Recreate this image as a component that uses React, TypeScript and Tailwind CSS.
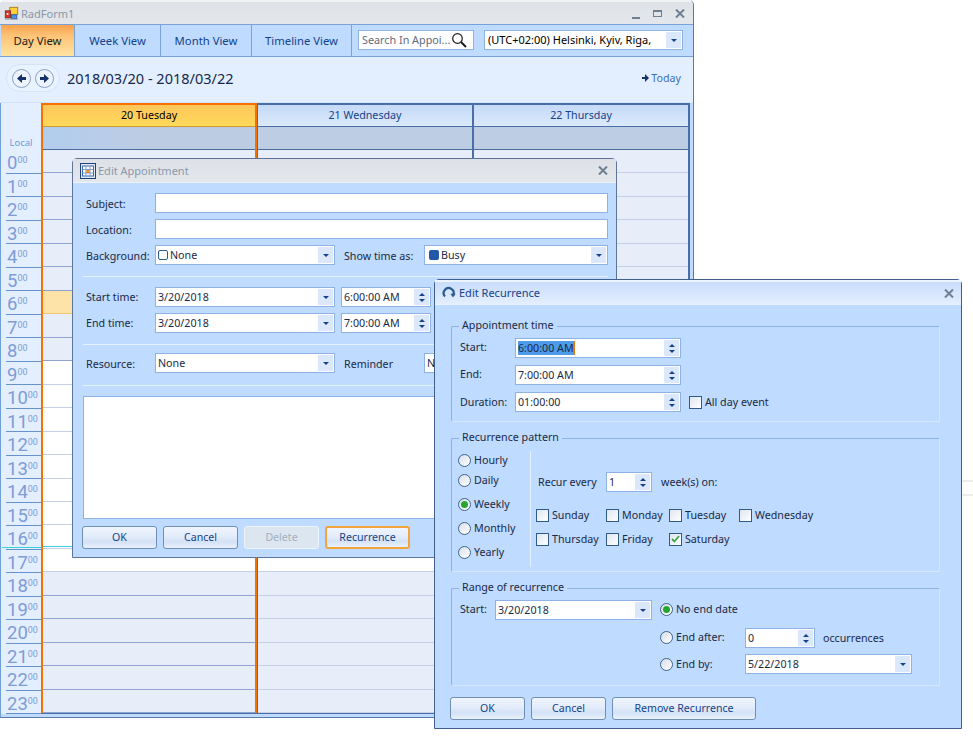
import type { ReactNode } from 'react';

const hours = Array.from({ length: 24 }, (_, i) => i);
const isShaded = (h: number) => h < 9 || h > 17;

function CloseIcon({ className = '' }: { className?: string }) {
  return (
    <svg width="10" height="9" viewBox="0 0 10 9" className={className}>
      <path d="M1 .5l8 8M9 .5l-8 8" stroke="#6f7f92" strokeWidth="2" fill="none" />
    </svg>
  );
}

function AppIcon() {
  return (
    <svg width="15" height="15" viewBox="0 0 17 17" className="mr-[2px]">
      <rect x="6.5" y="1.5" width="9" height="8" fill="#ffd23c" stroke="#a8791e" />
      <rect x="1.5" y="5.5" width="6" height="8" fill="#d8342a" stroke="#7b2a22" />
      <rect x="8.5" y="10" width="6" height="4.5" fill="#4c8fe6" stroke="#2a5fa8" />
      <rect x="3" y="8" width="2" height="2" fill="#fff" />
      <rect x="1" y="14.5" width="15" height="1" fill="#9aa6b4" />
    </svg>
  );
}

function CalendarIcon() {
  return (
    <svg width="16" height="16" viewBox="0 0 16 16">
      <rect x=".5" y=".5" width="15" height="15" fill="#dfe9f7" stroke="#1d4278" />
      <rect x="2.5" y="3" width="11" height="10" fill="#fff" stroke="#3a67a6" />
      <path d="M6 3v10M10 3v10M2.5 6.5h11M2.5 10h11" stroke="#7d9ccb" />
      <rect x="6.5" y="7" width="3" height="3" fill="#f08a1c" />
    </svg>
  );
}

function RecurIcon() {
  return (
    <svg width="14" height="14" viewBox="0 0 14 14">
      <path d="M3 10.5A5 5 0 1 1 11.3 9" stroke="#2b5a8f" strokeWidth="2.2" fill="none" />
      <path d="M8.4 7.8h5.2l-2.6 3.6z" fill="#2b5a8f" />
    </svg>
  );
}

function Triangle({ up = false }: { up?: boolean }) {
  return (
    <svg width="6" height="3" viewBox="0 0 6 3" className={up ? 'rotate-180' : ''}>
      <path d="M0 0h6L3 3z" fill="#15428b" />
    </svg>
  );
}

function DropCell() {
  return (
    <span className="mr-px flex h-[16px] w-[15px] shrink-0 items-center justify-center bg-[#dbe8fb]">
      <Triangle />
    </span>
  );
}

function SpinCell() {
  return (
    <span className="mr-px flex h-[16px] w-[15px] shrink-0 flex-col items-center justify-center gap-[3px] bg-[#dbe8fb]">
      <Triangle up />
      <Triangle />
    </span>
  );
}

function TextBox({ className = '' }: { className?: string }) {
  return <div className={`h-[20px] border border-[#8db2e3] bg-white ${className}`} />;
}

function Combo({ value, className = '', icon }: { value: string; className?: string; icon?: ReactNode }) {
  return (
    <div className={`flex h-[20px] items-center border border-[#8db2e3] bg-white pl-[2px] ${className}`}>
      {icon}
      <span className="flex-1 truncate text-[#1b2a44]">{value}</span>
      <DropCell />
    </div>
  );
}

function Spin({ value, className = '', selected = false }: { value: string; className?: string; selected?: boolean }) {
  return (
    <div className={`flex h-[20px] items-center border border-[#8db2e3] bg-white pl-[2px] ${className}`}>
      <span className="flex-1 truncate text-[#1b2a44]">
        {selected ? <span className="border-r border-[#e07a10] bg-[#4d9bea]">{value}</span> : value}
      </span>
      <SpinCell />
    </div>
  );
}

function Btn({ label, className = '', variant = 'normal' }: { label: string; className?: string; variant?: 'normal' | 'disabled' | 'focus' }) {
  const look = {
    normal: 'border border-[#6f8fb8] text-[#15428b]',
    focus: 'border-2 border-[#f2a53c] text-[#15428b]',
    disabled: 'border border-[#eef4fb] text-[#a3afbd]',
  }[variant];
  const fill =
    variant === 'disabled'
      ? 'bg-[#dbe6f1]'
      : 'bg-[linear-gradient(#f0f5fd_0%,#e3ecfa_45%,#d4e2f6_70%,#e9f1fc_100%)]';
  return (
    <div className={`flex h-[23px] items-center justify-center rounded-[3px] pb-px text-[10.6px] ${look} ${fill} ${className}`}>
      {label}
    </div>
  );
}

function Check({ label, checked = false }: { label: string; checked?: boolean }) {
  return (
    <div className="flex h-[20px] items-center gap-[3px] text-[#1b2a44]">
      <span className="flex h-[13px] w-[13px] items-center justify-center border border-[#2f5a8c] bg-[linear-gradient(135deg,#dfe6f0,#ffffff)]">
        {checked && (
          <svg width="9" height="8" viewBox="0 0 9 8">
            <path d="M1 4l2.5 2.5L8 1" stroke="#3fa648" strokeWidth="1.8" fill="none" />
          </svg>
        )}
      </span>
      <span>{label}</span>
    </div>
  );
}

function Radio({ label, checked = false }: { label: string; checked?: boolean }) {
  return (
    <div className="flex h-[20px] items-center gap-[3px] text-[#1b2a44]">
      <span className="flex h-[13px] w-[13px] items-center justify-center rounded-full border border-[#3d6491] bg-[linear-gradient(135deg,#d7dfe9,#ffffff)]">
        {checked && <span className="h-[7px] w-[7px] rounded-full bg-[#27a62f]" />}
      </span>
      <span>{label}</span>
    </div>
  );
}

function Group({ title, className = '', children }: { title: string; className?: string; children: ReactNode }) {
  return (
    <div className={`relative w-[489px] rounded-[2px] border border-[#8db2e3] border-b-[#d6e6fd] border-r-[#d6e6fd] ${className}`}>
      <span className="absolute -top-[9px] left-[7px] bg-[#bfdbff] px-[3px] leading-[14px] text-[#1b2a44]">{title}</span>
      {children}
    </div>
  );
}

function Divider({ className = '' }: { className?: string }) {
  return <div className={`h-px bg-[#e6f1ff] ${className}`} />;
}

function TimeRow({ hour }: { hour: number }) {
  return (
    <div className="relative ml-[5px] flex h-[23.5px] items-start border-b border-[#6591cd] pl-[1px] pt-[3px] font-['Roboto',sans-serif] text-[#7e9cd6]">
      <span className="text-[18.5px] leading-[20px]">{hour}</span>
      <span className="mt-[2px] text-[9px] leading-[10px]">00</span>
      {hour === 16 && <span className="absolute -left-[4px] right-0 bottom-[1px] h-px bg-[#3ccfe0]" />}
    </div>
  );
}

function DayColumn({ label, today = false, className = '' }: { label: string; today?: boolean; className?: string }) {
  return (
    <div className={`flex flex-col ${className}`}>
      <div
        className={`flex h-[22px] items-center justify-center border-b ${
          today
            ? 'border-[#cf9a30] bg-[linear-gradient(#fdc65c,#ffd95a)] text-black'
            : 'border-[#4a6ea8] bg-[linear-gradient(#c5daf7,#dbe9fc)] text-[#15428b]'
        }`}
      >
        {label}
      </div>
      <div
        className={`h-[23px] border-b border-[#4a6a9c] ${
          today ? 'bg-[linear-gradient(90deg,#b2cdee,#bccce3_50%)]' : 'bg-[#bdcde3]'
        }`}
      />
      {hours.map((h) => {
        const peach = today && h === 6;
        const shade = peach
          ? 'bg-[#fee3a8] border-[#f3c474]'
          : isShaded(h)
            ? today
              ? 'bg-[#e7eef9] border-[#8ea3cf]'
              : 'bg-[#e7eef9] border-[#c6cfe6]'
            : 'bg-white border-[#c6cfe6]';
        return (
          <div key={h} className={`relative h-[23.5px] border-b ${shade}`}>
            {today && h === 16 && <span className="absolute inset-x-0 bottom-[1px] h-px bg-[#3ccfe0]" />}
          </div>
        );
      })}
    </div>
  );
}

function NavArrow({ right = false }: { right?: boolean }) {
  return (
    <span className="flex h-[19px] w-[19px] items-center justify-center rounded-full border border-[#8aa0c4] bg-[#edf4ff]">
      <svg width="9" height="9" viewBox="0 0 9 9" className={right ? '' : 'rotate-180'}>
        <path d="M0 3h4V0l5 4.5L4 9V6H0z" fill="#15326b" />
      </svg>
    </span>
  );
}

function MainWindow() {
  return (
    <div className="absolute left-0 top-0 flex h-[718px] w-[694px] flex-col overflow-hidden rounded-t-[5px] border-b border-r border-[#5a79a8] bg-[#bfdbff]">
      <div className="flex h-[24px] shrink-0 items-center border-t-2 border-[#f2f3f5] bg-[linear-gradient(#dfe2e7,#e3e6ea)] pl-[4px] text-[11px] text-[#8a97ab]">
        <AppIcon />
        <span className="mt-[1px]">RadForm1</span>
        <span className="ml-auto mr-[8px] flex items-center gap-[13px]">
          <span className="mt-[9px] h-[2px] w-[8px] bg-[#6f7f92]" />
          <span className="h-[7px] w-[9px] border border-t-2 border-[#6f7f92]" />
          <CloseIcon />
        </span>
      </div>
      <div className="flex h-[33px] shrink-0 border-y border-[#7aa2d8] bg-[#bfdbff] text-[11.3px]">
        <div className="ml-[1px] flex w-[74px] items-center justify-center border-r border-[#7aa2d8] bg-[linear-gradient(#f9a24e_0%,#fdc376_35%,#ffe3a0_100%)] text-[#1c1c1c]">
          Day View
        </div>
        <div className="flex w-[86px] items-center justify-center border-r border-[#7aa2d8] text-[#15428b]">Week View</div>
        <div className="flex w-[91px] items-center justify-center border-r border-[#7aa2d8] text-[#15428b]">Month View</div>
        <div className="flex w-[100px] items-center justify-center border-r border-[#7aa2d8] text-[#15428b]">Timeline View</div>
        <div className="ml-[6px] mt-[5px] flex h-[20px] w-[116px] items-center border border-[#8db2e3] bg-white pl-[3px] text-[10.8px] text-[#5f6b7a]">
          <span className="flex-1 whitespace-nowrap">Search In Appoi...</span>
          <svg width="16" height="16" viewBox="0 0 16 16" className="mr-[6px] shrink-0">
            <circle cx="6.5" cy="6.5" r="4.8" stroke="#1a1a1a" strokeWidth="1.2" fill="none" />
            <path d="M10 10l5 5" stroke="#1a1a1a" strokeWidth="2" />
          </svg>
        </div>
        <div className="ml-[10px] mt-[5px] flex h-[20px] w-[199px] items-center border border-[#8db2e3] bg-white pl-[3px] text-[11px] text-black">
          <span className="flex-1 whitespace-nowrap">(UTC+02:00) Helsinki, Kyiv, Riga,</span>
          <DropCell />
        </div>
      </div>
      <div className="flex h-[46px] shrink-0 items-center border-b border-[#d3e2f7] bg-[#e3efff] pb-[3px] pl-[6px]">
        <div className="flex h-[28px] w-[54px] items-center justify-center gap-[4px] rounded-full border border-[#d6e3f6] bg-[#e9f2ff]">
          <NavArrow />
          <NavArrow right />
        </div>
        <span className="ml-[7px] text-[14.5px] text-[#15284b]">2018/03/20 - 2018/03/22</span>
        <span className="ml-auto mr-[12px] flex items-center gap-[2px] text-[#3b6fb5]">
          <svg width="7" height="8" viewBox="0 0 7 8">
            <path d="M0 3h3V0l4 4-4 4V5H0z" fill="#15326b" />
          </svg>
          Today
        </span>
      </div>
      <div className="flex min-h-0 flex-1 border-l border-[#6f9fd8] pb-[3px] pr-[3px]">
        <div className="w-[40px] shrink-0 overflow-hidden bg-[#e3efff]">
          <div className="flex h-[47px] items-end justify-center text-[9.5px] text-[#6b9bd8]">Local</div>
          {hours.map((h) => (
            <TimeRow key={h} hour={h} />
          ))}
        </div>
        <div className="flex flex-1 overflow-hidden border-b border-[#4a6ea8]">
          <DayColumn label="20 Tuesday" today className="w-[216px] border-x-2 border-t-2 border-[#f57200]" />
          <DayColumn label="21 Wednesday" className="w-[217px] border-l border-r-2 border-t-2 border-[#4a6ea8]" />
          <DayColumn label="22 Thursday" className="w-[216px] border-r-2 border-t-2 border-[#4a6ea8]" />
        </div>
      </div>
    </div>
  );
}

function AppointmentDialog() {
  return (
    <div className="absolute left-[72px] top-[158px] w-[545px] rounded-t-[5px] border border-[#5d7599] bg-[#bfdbff]">
      <div className="flex h-[24px] items-center border-b border-[#eef3fa] bg-[linear-gradient(#dde0e6,#e4e7eb)] pl-[7px] text-[11px] text-[#8a97ab]">
        <CalendarIcon />
        <span className="ml-[2px] mt-[1px]">Edit Appointment</span>
        <CloseIcon className="ml-auto mr-[8px]" />
      </div>
      <div className="pb-[8px] pl-[10px] pr-[8px] pt-[10px] text-[#1b2a44]">
        <div className="flex items-center">
          <span className="w-[72px] pl-[3px] pt-[2px]">Subject:</span>
          <TextBox className="flex-1" />
        </div>
        <div className="mt-[6px] flex items-center">
          <span className="w-[72px] pl-[3px] pt-[2px]">Location:</span>
          <TextBox className="flex-1" />
        </div>
        <div className="mt-[6px] flex items-center">
          <span className="w-[72px] pl-[3px] pt-[2px]">Background:</span>
          <Combo
            value="None"
            className="w-[180px]"
            icon={<span className="mr-[2px] h-[10px] w-[10px] rounded-[2px] border border-[#2f5a8c] bg-white" />}
          />
          <span className="w-[89px] pl-[9px] pt-[2px]">Show time as:</span>
          <Combo
            value="Busy"
            className="flex-1"
            icon={<span className="mx-[2px] h-[10px] w-[10px] rounded-[2px] bg-[#2358a8]" />}
          />
        </div>
        <Divider className="mt-[11px]" />
        <div className="mt-[10px] flex items-center">
          <span className="w-[72px] pl-[3px]">Start time:</span>
          <Combo value="3/20/2018" className="w-[180px]" />
          <Spin value="6:00:00 AM" className="ml-[6px] w-[90px]" />
        </div>
        <div className="mt-[6px] flex items-center">
          <span className="w-[72px] pl-[3px]">End time:</span>
          <Combo value="3/20/2018" className="w-[180px]" />
          <Spin value="7:00:00 AM" className="ml-[6px] w-[90px]" />
        </div>
        <Divider className="mt-[11px]" />
        <div className="mt-[8px] flex items-center">
          <span className="w-[72px] pl-[3px] pt-[2px]">Resource:</span>
          <Combo value="None" className="w-[180px]" />
          <span className="w-[89px] pl-[9px] pt-[2px]">Reminder</span>
          <Combo value="None" className="flex-1" />
        </div>
        <Divider className="mt-[12px]" />
        <div className="mt-[10px] h-[123px] border border-[#8db2e3] bg-white" />
        <div className="-ml-px mt-[7px] flex gap-[6px]">
          <Btn label="OK" className="w-[75px]" />
          <Btn label="Cancel" className="w-[75px]" />
          <Btn label="Delete" className="w-[75px]" variant="disabled" />
          <Btn label="Recurrence" className="w-[85px]" variant="focus" />
        </div>
      </div>
    </div>
  );
}

function RecurrenceDialog() {
  return (
    <div className="absolute left-[434px] top-[279px] w-[528px] rounded-t-[5px] border border-[#3f5f8c] bg-[#bfdbff]">
      <div className="flex h-[25px] items-center border-b border-t-2 border-b-[#eaf2ff] border-t-[#eef4ff] bg-[linear-gradient(#c8dcfb,#e4efff)] pl-[7px] text-[11px] text-[#15428b]">
        <RecurIcon />
        <span className="ml-[3px]">Edit Recurrence</span>
        <CloseIcon className="ml-auto mr-[7px]" />
      </div>
      <div className="pb-[8px] pl-[16px] pt-[21px] text-[#1b2a44]">
        <Group title="Appointment time" className="h-[96px]">
          <div className="pl-[8px] pt-[11px]">
            <div className="flex items-center">
              <span className="w-[55px] pb-[2px]">Start:</span>
              <Spin value="6:00:00 AM" className="w-[166px]" selected />
            </div>
            <div className="mt-[7px] flex items-center">
              <span className="w-[55px] pb-[2px]">End:</span>
              <Spin value="7:00:00 AM" className="w-[166px]" />
            </div>
            <div className="mt-[7px] flex items-center">
              <span className="w-[55px]">Duration:</span>
              <Spin value="01:00:00" className="w-[166px]" />
              <div className="ml-[8px]">
                <Check label="All day event" />
              </div>
            </div>
          </div>
        </Group>
        <Group title="Recurrence pattern" className="mt-[16px] flex h-[134px]">
          <div className="w-[78px] pl-[6px] pt-[11px]">
            <Radio label="Hourly" />
            <Radio label="Daily" />
            <div className="mt-[4px]">
              <Radio label="Weekly" checked />
            </div>
            <div className="mt-[4px]">
              <Radio label="Monthly" />
            </div>
            <div className="mt-[4px]">
              <Radio label="Yearly" />
            </div>
          </div>
          <div className="mt-[12px] h-[116px] w-px bg-[#e6f1ff]" />
          <div className="pl-[5px] pt-[33px]">
            <div className="flex items-center pl-[2px]">
              <span className="w-[68px]">Recur every</span>
              <Spin value="1" className="w-[46px]" />
              <span className="ml-[9px]">week(s) on:</span>
            </div>
            <div className="mt-[13px] grid grid-cols-[70px_63px_70px_auto] gap-y-[4px]">
              <Check label="Sunday" />
              <Check label="Monday" />
              <Check label="Tuesday" />
              <Check label="Wednesday" />
              <Check label="Thursday" />
              <Check label="Friday" />
              <Check label="Saturday" checked />
            </div>
          </div>
        </Group>
        <Group title="Range of recurrence" className="mt-[16px] flex h-[98px]">
          <div className="flex w-[208px] items-start pl-[8px] pt-[11px]">
            <span className="w-[35px] pt-[2px]">Start:</span>
            <Combo value="3/20/2018" className="w-[157px]" />
          </div>
          <div className="pt-[10px]">
            <Radio label="No end date" checked />
            <div className="mt-[8px] flex items-center">
              <div className="w-[85px] pb-[2px]">
                <Radio label="End after:" />
              </div>
              <Spin value="0" className="w-[70px]" />
              <span className="ml-[8px]">occurrences</span>
            </div>
            <div className="mt-[5px] flex items-center">
              <div className="w-[85px]">
                <Radio label="End by:" />
              </div>
              <Combo value="5/22/2018" className="w-[167px]" />
            </div>
          </div>
        </Group>
        <div className="-ml-[1px] mt-[11px] flex gap-[6px]">
          <Btn label="OK" className="w-[75px]" />
          <Btn label="Cancel" className="w-[75px]" />
          <Btn label="Remove Recurrence" className="w-[144px]" />
        </div>
      </div>
    </div>
  );
}

export default function App() {
  return (
    <div className="relative h-[738px] w-[973px] overflow-hidden bg-white font-['Noto_Sans',sans-serif] text-[10.7px] leading-[14px]">
      <div className="absolute right-0 top-[480px] h-[2px] w-[11px] bg-[#eeeeee]" />
      <div className="absolute right-0 top-[494px] h-[2px] w-[11px] bg-[#eeeeee]" />
      <MainWindow />
      <AppointmentDialog />
      <RecurrenceDialog />
    </div>
  );
}
